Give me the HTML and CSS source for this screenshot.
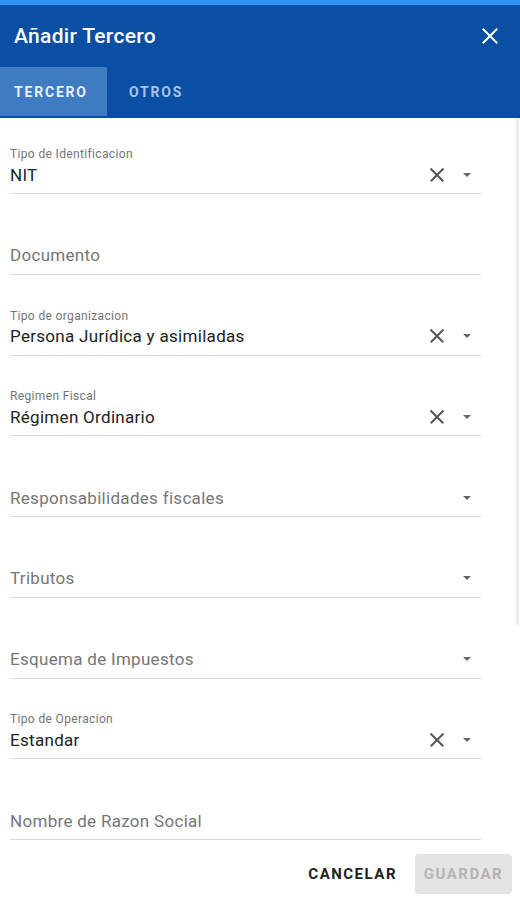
FILE: index.html
```html
<!DOCTYPE html>
<html lang="es">
<head>
<meta charset="utf-8">
<title>Añadir Tercero</title>
<link rel="stylesheet" href="styles.css">
</head>
<body>
<div class="dialog">
  <div class="topstrip"></div>
  <header class="header">
    <div class="titlebar">
      <h1 class="title">Añadir Tercero</h1>
      <button class="close" aria-label="Cerrar">
        <svg width="16" height="16" viewBox="0 0 16 16"><path d="M1.5 1.5 L14.5 14.5 M14.5 1.5 L1.5 14.5" stroke="#fff" stroke-width="2" fill="none" stroke-linecap="square"/></svg>
      </button>
    </div>
    <nav class="tabs">
      <div class="tab active">TERCERO</div>
      <div class="tab">OTROS</div>
    </nav>
  </header>
  <main class="content">
    <div class="form">
      <div class="field">
        <div class="label">Tipo de Identificacion</div>
        <div class="row"><span class="value">NIT</span><span class="icons"><span class="clear"></span><span class="caret"></span></span></div>
      </div>
      <div class="field">
        <div class="label"></div>
        <div class="row"><span class="placeholder">Documento</span></div>
      </div>
      <div class="field">
        <div class="label">Tipo de organizacion</div>
        <div class="row"><span class="value">Persona Jurídica y asimiladas</span><span class="icons"><span class="clear"></span><span class="caret"></span></span></div>
      </div>
      <div class="field">
        <div class="label">Regimen Fiscal</div>
        <div class="row"><span class="value">Régimen Ordinario</span><span class="icons"><span class="clear"></span><span class="caret"></span></span></div>
      </div>
      <div class="field">
        <div class="label"></div>
        <div class="row"><span class="placeholder">Responsabilidades fiscales</span><span class="icons"><span class="caret"></span></span></div>
      </div>
      <div class="field">
        <div class="label"></div>
        <div class="row"><span class="placeholder">Tributos</span><span class="icons"><span class="caret"></span></span></div>
      </div>
      <div class="field">
        <div class="label"></div>
        <div class="row"><span class="placeholder">Esquema de Impuestos</span><span class="icons"><span class="caret"></span></span></div>
      </div>
      <div class="field">
        <div class="label">Tipo de Operacion</div>
        <div class="row"><span class="value">Estandar</span><span class="icons"><span class="clear"></span><span class="caret"></span></span></div>
      </div>
      <div class="field">
        <div class="label"></div>
        <div class="row"><span class="placeholder">Nombre de Razon Social</span></div>
      </div>
    </div>
    <div class="scrollthumb"></div>
  </main>
  <footer class="actions">
    <button class="btn cancel">CANCELAR</button>
    <button class="btn save" disabled>GUARDAR</button>
  </footer>
</div>
</body>
</html>
```

FILE: styles.css
```css
* { box-sizing: border-box; }
html, body { margin: 0; padding: 0; }
body {
  width: 520px;
  height: 900px;
  overflow: hidden;
  font-family: Roboto, "Liberation Sans", sans-serif;
  background: #fff;
}
.dialog {
  display: flex;
  flex-direction: column;
  height: 900px;
}
.topstrip {
  height: 5px;
  background: #2f93f2;
}
.header {
  background: #0a4fa3;
  color: #fff;
}
.titlebar {
  height: 62px;
  display: flex;
  align-items: center;
  justify-content: space-between;
  padding: 0 22px 0 14px;
}
.title {
  margin: 0;
  font-size: 21px;
  font-weight: 500;
  letter-spacing: 0.3px;
}
.close {
  background: none;
  border: 0;
  padding: 0;
  width: 16px;
  height: 16px;
  display: flex;
}
.tabs {
  display: flex;
  height: 51px;
  gap: 6px;
}
.tab {
  height: 49px;
  display: flex;
  align-items: center;
  padding: 0 16px;
  font-size: 14px;
  font-weight: 700;
  letter-spacing: 1.8px;
  color: #a9c4ea;
}
.tab.active {
  background: #3f7bc0;
  color: #e6eef8;
  width: 107px;
  padding-left: 14px;
}
.content {
  position: relative;
  flex: 1;
  overflow: hidden;
}
.form {
  display: flex;
  flex-direction: column;
  gap: 33.75px;
  padding: 29px 39px 0 10px;
}
.field {
  border-bottom: 1px solid #dcdcdc;
  padding-bottom: 5px;
}
.label {
  height: 14px;
  font-size: 12px;
  line-height: 14px;
  letter-spacing: 0.35px;
  color: #757575;
}
.row {
  height: 27px;
  display: flex;
  align-items: center;
  justify-content: space-between;
  font-size: 17px;
  letter-spacing: 0.3px;
  padding-right: 10px;
}
.value { color: #222; }
.placeholder { color: #767676; }
.icons {
  display: flex;
  align-items: center;
}
.clear {
  position: relative;
  width: 16px;
  height: 16px;
  margin-right: 18px;
}
.clear::before, .clear::after {
  content: "";
  position: absolute;
  left: -1px;
  top: 7px;
  width: 18px;
  height: 1.6px;
  background: #555;
  transform: rotate(45deg);
}
.clear::after { transform: rotate(-45deg); }
.caret {
  width: 0;
  height: 0;
  border-left: 4.5px solid transparent;
  border-right: 4.5px solid transparent;
  border-top: 4.5px solid #666;
}
.scrollthumb {
  position: absolute;
  right: 1px;
  top: 0;
  width: 3px;
  height: 507px;
  background: #ececec;
}
.actions {
  height: 52px;
  display: flex;
  align-items: center;
  justify-content: flex-end;
  gap: 10px;
  padding: 0 8px 0 0;
  background: #fff;
}
.btn {
  font-family: Roboto, "Liberation Sans", sans-serif;
  font-size: 15px;
  font-weight: 700;
  letter-spacing: 1.5px;
  border: 0;
  border-radius: 4px;
  height: 40px;
  background: none;
}
.cancel {
  color: #222;
  padding: 0 8px;
}
.save {
  width: 97px;
  background: #e4e4e4;
  color: #b3b3b3;
  padding: 0;
}
```
